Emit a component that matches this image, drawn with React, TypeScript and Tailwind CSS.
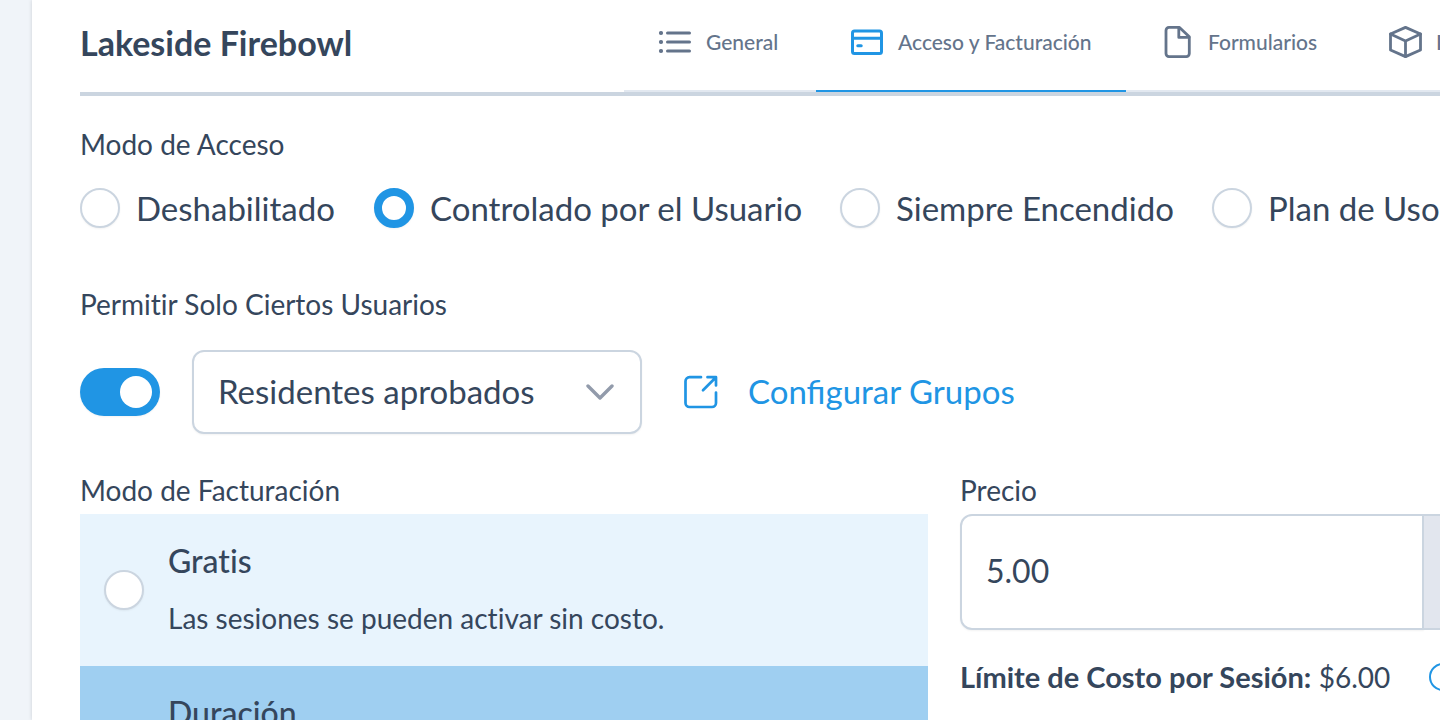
import { useState } from "react";
import type { ReactNode } from "react";

interface TabItem {
  id: string;
  label: string;
  width: string;
  icon: ReactNode;
}

interface BillingOption {
  id: string;
  title: string;
  description?: string;
}

const iconProps = {
  viewBox: "0 0 36 36",
  fill: "none",
  stroke: "currentColor",
  strokeLinecap: "round" as const,
  strokeLinejoin: "round" as const,
  "aria-hidden": true,
};

function ListIcon() {
  return (
    <svg {...iconProps} className="size-9 shrink-0" strokeWidth={3}>
      <path d="M11.5 9H33.5M11.5 18H33.5M11.5 27H33.5" />
      <path d="M4.8 9H5.2M4.8 18H5.2M4.8 27H5.2" strokeWidth={3.8} />
    </svg>
  );
}

function CardIcon() {
  return (
    <svg {...iconProps} className="size-9 shrink-0 text-[#2095e4]" strokeWidth={3}>
      <rect x="4.5" y="7" width="29" height="22.5" rx="2" />
      <path d="M4.5 14.3H33.5" />
      <path d="M9.8 21.8H13.2" />
    </svg>
  );
}

function FileIcon() {
  return (
    <svg {...iconProps} className="size-9 shrink-0" strokeWidth={2.8}>
      <path d="M21.5 3.4H11a3 3 0 0 0-3 3v23.2a3 3 0 0 0 3 3h17.3a3 3 0 0 0 3-3V12.8z" />
      <path d="M20.8 3.8V13.4h10.2" />
    </svg>
  );
}

function BoxIcon() {
  return (
    <svg {...iconProps} className="size-9 shrink-0" strokeWidth={2.8}>
      <path d="M19.5 3.4L34.5 10V26L19.5 32.6L4.5 26V10Z" />
      <path d="M4.5 10L19.5 17L34.5 10M19.5 17V32.6" />
    </svg>
  );
}

function ExternalIcon() {
  return (
    <svg {...iconProps} className="size-9 shrink-0" strokeWidth={2.7}>
      <path d="M19 3.2H7.5a4 4 0 0 0-4 4V29a4 4 0 0 0 4 4H30a4 4 0 0 0 4-4V18.5" />
      <path d="M25.5 3.2H34V11.5M33.2 4L21 16.2" />
    </svg>
  );
}

const tabs: TabItem[] = [
  { id: "general", label: "General", width: "w-48", icon: <ListIcon /> },
  { id: "access", label: "Acceso y Facturación", width: "w-[310px]", icon: <CardIcon /> },
  { id: "forms", label: "Formularios", width: "w-57", icon: <FileIcon /> },
  { id: "inventory", label: "Inventario", width: "w-56", icon: <BoxIcon /> },
];

const accessModes = [
  { id: "disabled", label: "Deshabilitado" },
  { id: "user", label: "Controlado por el Usuario" },
  { id: "always", label: "Siempre Encendido" },
  { id: "plan", label: "Plan de Uso" },
];

const billingOptions: BillingOption[] = [
  { id: "free", title: "Gratis", description: "Las sesiones se pueden activar sin costo." },
  { id: "duration", title: "Duración" },
];

const radioClass =
  "size-10 shrink-0 appearance-none rounded-full border-2 border-[#cbd5e0] bg-white shadow-xs checked:border-8 checked:border-[#2095e4]";

export default function App() {
  const [tab, setTab] = useState("access");
  const [mode, setMode] = useState("user");
  const [limited, setLimited] = useState(true);
  const [billing, setBilling] = useState("duration");
  const [price, setPrice] = useState("5.00");

  return (
    <div className="flex h-screen overflow-hidden bg-[#f0f4f9] pl-8 font-['Lato','Open_Sans',sans-serif] text-[#35465c] [font-variant-ligatures:none]">
      <main className="min-w-0 flex-1 bg-white pl-12 shadow-[0_0_4px_rgba(0,0,0,0.15)]">
        <header className="flex overflow-hidden border-b-4 border-[#cbd5e0]">
          <h1 className="w-[544px] shrink-0 pt-5 text-[34px] leading-[46px] font-bold">Lakeside Firebowl</h1>
          <nav className="flex">
            {tabs.map((item) => (
              <button
                key={item.id}
                type="button"
                onClick={() => setTab(item.id)}
                className={`flex shrink-0 items-center gap-3.5 border-b-2 pt-6 pb-[30px] pl-8 text-[21px] leading-[34px] font-medium whitespace-nowrap text-[#64748b] ${item.width} ${
                  tab === item.id ? "border-[#2095e4]" : "border-[#e2e8f0]"
                }`}
              >
                {item.icon}
                {item.label}
              </button>
            ))}
          </nav>
        </header>

        <fieldset className="pt-7">
          <legend className="float-left w-full text-[28px] leading-10">Modo de Acceso</legend>
          <div className="clear-both grid grid-cols-[294px_466px_372px_auto] overflow-hidden pt-5 whitespace-nowrap">
            {accessModes.map((item) => (
              <label key={item.id} className="flex items-center gap-4 text-[33px] leading-[48px]">
                <input
                  type="radio"
                  name="access-mode"
                  checked={mode === item.id}
                  onChange={() => setMode(item.id)}
                  className={radioClass}
                />
                {item.label}
              </label>
            ))}
          </div>
        </fieldset>

        <section className="pt-13">
          <label htmlFor="limit-users" className="block text-[28px] leading-10">
            Permitir Solo Ciertos Usuarios
          </label>
          <div className="flex items-center pt-[26px] text-[33px]">
            <input
              id="limit-users"
              type="checkbox"
              role="switch"
              checked={limited}
              onChange={(e) => setLimited(e.target.checked)}
              className="flex h-12 w-20 shrink-0 appearance-none items-center rounded-full bg-[#cbd5e0] px-2 shadow-xs before:size-8 before:rounded-full before:bg-white checked:justify-end checked:bg-[#2095e4]"
            />
            <div className="relative ml-8">
              <select
                aria-label="Grupo de usuarios"
                className="h-21 w-[450px] appearance-none rounded-xl border-2 border-[#cbd5e0] bg-white pl-6 shadow-xs"
              >
                <option>Residentes aprobados</option>
              </select>
              <svg
                viewBox="0 0 28 16"
                fill="none"
                stroke="#929bab"
                strokeWidth="3.4"
                strokeLinecap="round"
                strokeLinejoin="round"
                className="pointer-events-none absolute top-[34px] right-7 h-4 w-7"
                aria-hidden
              >
                <path d="M2 2L14 14L26 2" />
              </svg>
            </div>
            <a
              href="#grupos"
              className="ml-10 flex items-center gap-[30px] text-[#2095e4] [font-variant-ligatures:common-ligatures]"
            >
              <ExternalIcon />
              Configurar Grupos
            </a>
          </div>
        </section>

        <div className="grid grid-cols-[53fr_30fr] gap-8 pt-9">
          <fieldset className="min-w-0">
            <legend className="text-[28px] leading-10">Modo de Facturación</legend>
            <div className="mt-1">
              {billingOptions.map((item) => (
                <label
                  key={item.id}
                  className={`flex min-h-[152px] items-center gap-6 pl-6 ${
                    billing === item.id ? "bg-[#9fcff1]" : "bg-[#e8f4fd]"
                  }`}
                >
                  <input
                    type="radio"
                    name="billing-mode"
                    checked={billing === item.id}
                    onChange={() => setBilling(item.id)}
                    className={radioClass}
                  />
                  <span className="self-start pt-6">
                    <span className="block text-[32px] leading-[46px] font-medium">{item.title}</span>
                    {item.description && (
                      <span className="block pt-3.5 text-[28px] leading-10">{item.description}</span>
                    )}
                  </span>
                </label>
              ))}
            </div>
          </fieldset>

          <div className="min-w-0">
            <label htmlFor="price" className="block text-[28px] leading-10">
              Precio
            </label>
            <div className="mt-1 flex">
              <input
                id="price"
                type="text"
                value={price}
                onChange={(e) => setPrice(e.target.value)}
                className="h-29 min-w-0 flex-1 rounded-l-xl border-2 border-[#cbd5e0] bg-white px-6 pb-1 text-[32px] shadow-xs"
              />
              <div className="w-4 border-y-2 border-[#cbd5e0] bg-[#e2e6ee]" />
            </div>
            <div className="mt-7 flex items-center overflow-hidden text-[29px] leading-[38px] whitespace-nowrap">
              <p className="w-[469px] shrink-0">
                <strong className="font-bold">Límite de Costo por Sesión:</strong>{" "}
                <span className="text-[28px]">$6.00</span>
              </p>
              <button
                type="button"
                aria-label="Información"
                className="size-7 shrink-0 rounded-full border-2 border-[#2095e4]"
              />
            </div>
          </div>
        </div>
      </main>
    </div>
  );
}
